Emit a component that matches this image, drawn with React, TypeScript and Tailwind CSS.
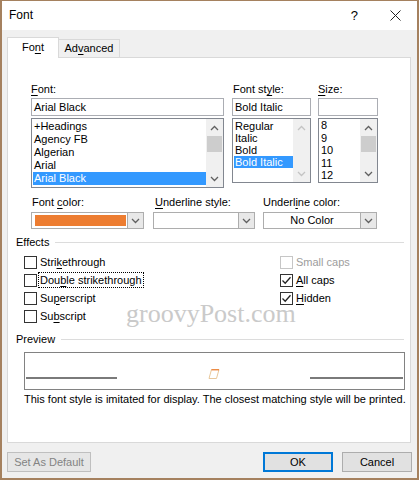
import React from "react";

const U = ({ children }: { children: React.ReactNode }) => (
  <span className="underline underline-offset-[2px] decoration-[1px]">{children}</span>
);

function Chev({ up, color = "#606060" }: { up?: boolean; color?: string }) {
  return (
    <svg width="9" height="6" viewBox="0 0 9 6">
      <path
        d={up ? "M1 5 L4.5 1.5 L8 5" : "M1 1 L4.5 4.5 L8 1"}
        fill="none"
        stroke={color}
        strokeWidth="1.3"
      />
    </svg>
  );
}

function ScrollBar({ disabled, thumb }: { disabled?: boolean; thumb?: boolean }) {
  const c = disabled ? "#c4c4c4" : "#606060";
  return (
    <div className="w-[17px] h-full bg-[#f0f0f0] flex flex-col">
      <div className="h-[17px] flex items-center justify-center">
        <Chev up color={c} />
      </div>
      {thumb ? <div className="h-[16px] mx-[1px] bg-[#cdcdcd]" /> : null}
      <div className="flex-1" />
      <div className="h-[17px] flex items-center justify-center">
        <Chev color={c} />
      </div>
    </div>
  );
}

function Check({ checked, disabled }: { checked?: boolean; disabled?: boolean }) {
  return (
    <div
      className={
        "w-[13px] h-[13px] border bg-white flex items-center justify-center shrink-0 " +
        (disabled ? "border-[#c6c6c6]" : "border-[#333333]")
      }
    >
      {checked ? (
        <svg width="11" height="11" viewBox="0 0 11 11">
          <path d="M1.5 5.5 L4.2 8.2 L9.5 2.2" fill="none" stroke="#222" strokeWidth="1.3" />
        </svg>
      ) : null}
    </div>
  );
}

function Row({
  children,
  checked,
  disabled,
}: {
  children: React.ReactNode;
  checked?: boolean;
  disabled?: boolean;
}) {
  return (
    <div className="h-[18px] flex items-center">
      <Check checked={checked} disabled={disabled} />
      <div className={"ml-[3px] " + (disabled ? "text-[#9d9d9d]" : "text-black")}>{children}</div>
    </div>
  );
}

function Dropdown({ children, w }: { children?: React.ReactNode; w: string }) {
  return (
    <div className={"h-[17px] border border-[#adadad] bg-white flex " + w}>
      <div className="flex-1 flex items-center">{children}</div>
      <div className="w-[16px] border-l border-[#adadad] bg-[#e8e8e8] flex items-center justify-center">
        <Chev />
      </div>
    </div>
  );
}

function SectionHeader({ label }: { label: string }) {
  return (
    <div className="h-[15px] flex items-center pl-[8px] pr-[6px]">
      <span>{label}</span>
      <div className="flex-1 h-px bg-[#dcdcdc] ml-[6px]" />
    </div>
  );
}

export default function App() {
  const fonts = ["+Headings", "Agency FB", "Algerian", "Arial", "Arial Black"];
  const styles = ["Regular", "Italic", "Bold", "Bold Italic"];
  const sizes = ["8", "9", "10", "11", "12"];
  return (
    <div className="w-[419px] h-[480px] flex flex-col border-t border-l-2 border-r-2 border-b-2 border-[#a5815f] font-['Segoe_UI','Liberation_Sans',Arial,sans-serif] text-[11px] leading-[15px] text-black">
      {/* title bar */}
      <div className="h-[29px] bg-white flex items-center pl-[7px] pr-[16px] text-[12px]">
        <span>Font</span>
        <div className="flex-1" />
        <span className="mr-[32px] text-[13px]">?</span>
        <svg width="11" height="11" viewBox="0 0 11 11">
          <path d="M0.5 0.5 L10.5 10.5 M10.5 0.5 L0.5 10.5" stroke="#222" strokeWidth="1" />
        </svg>
      </div>

      {/* body */}
      <div className="flex-1 bg-[#f0f0f0] flex flex-col pt-[7px]">
        {/* tabs */}
        <div className="h-[20px] flex items-end ml-[5px]">
          <div className="relative z-10 h-[21px] w-[52px] bg-white border-t border-l border-r border-[#d9d9d9] flex items-center justify-center -mb-px pb-px">
            <span>
              Fo<U>n</U>t
            </span>
          </div>
          <div className="h-[18px] w-[61px] border-t border-r border-[#d9d9d9] bg-[#f0f0f0] flex items-center justify-center">
            <span>
              Ad<U>v</U>anced
            </span>
          </div>
        </div>

        {/* panel */}
        <div className="relative ml-[5px] w-[404px] h-[386px] bg-white border border-[#d9d9d9] flex flex-col pt-[24px]">
          {/* row 1 */}
          <div className="flex pl-[23px]">
            <div className="w-[193px] flex flex-col">
              <div className="h-[15px]">
                <U>F</U>ont:
              </div>
              <div className="mt-[1px] h-[18px] border border-[#abadb3] flex items-center pl-[2px]">
                Arial Black
              </div>
              <div className="mt-[2px] h-[70px] border border-[#828790] flex">
                <div className="flex-1 flex flex-col pt-[1px] pl-px">
                  {fonts.map((f, i) => (
                    <div
                      key={f}
                      className={
                        "h-[13px] leading-[13px] pl-px " +
                        (i === 4 ? "bg-[#3399ff] text-white" : "")
                      }
                    >
                      {f}
                    </div>
                  ))}
                </div>
                <ScrollBar thumb />
              </div>
            </div>
            <div className="w-[79px] ml-[8px] flex flex-col">
              <div className="h-[15px] pl-px">
                Font st<U>y</U>le:
              </div>
              <div className="mt-[1px] h-[18px] border border-[#abadb3] flex items-center pl-[2px]">
                Bold Italic
              </div>
              <div className="mt-[2px] h-[65px] border border-[#828790] flex">
                <div className="flex-1 flex flex-col pt-[1px] pl-px">
                  {styles.map((f, i) => (
                    <div
                      key={f}
                      className={
                        "h-[12px] leading-[12px] pl-px " +
                        (i === 3 ? "bg-[#3399ff] text-white" : "")
                      }
                    >
                      {f}
                    </div>
                  ))}
                </div>
                <ScrollBar disabled />
              </div>
            </div>
            <div className="w-[60px] ml-[7px] flex flex-col">
              <div className="h-[15px]">
                <U>S</U>ize:
              </div>
              <div className="mt-[1px] h-[18px] border border-[#abadb3]" />
              <div className="mt-[2px] h-[65px] border border-[#828790] flex">
                <div className="flex-1 flex flex-col pl-[2px]">
                  {sizes.map((f) => (
                    <div key={f} className="h-[12.5px] leading-[12.5px]">
                      {f}
                    </div>
                  ))}
                </div>
                <ScrollBar thumb />
              </div>
            </div>
          </div>

          {/* row 2 */}
          <div className="flex pl-[23px] mt-[7px]">
            <div className="flex flex-col w-[113px]">
              <div className="h-[15px] pl-px">
                Font <U>c</U>olor:
              </div>
              <div className="mt-[2px]">
                <Dropdown w="w-[113px]">
                  <div className="ml-[3px] h-[11px] w-[91px] bg-[#ed7d31]" />
                </Dropdown>
              </div>
            </div>
            <div className="flex flex-col w-[102px] ml-[9px]">
              <div className="h-[15px] pl-[2px]">
                <U>U</U>nderline style:
              </div>
              <div className="mt-[2px]">
                <Dropdown w="w-[102px]" />
              </div>
            </div>
            <div className="flex flex-col w-[114px] ml-[8px]">
              <div className="h-[15px]">
                Underl<U>i</U>ne color:
              </div>
              <div className="mt-[2px]">
                <Dropdown w="w-[114px]">
                  <div className="w-full text-center">No Color</div>
                </Dropdown>
              </div>
            </div>
          </div>

          {/* effects */}
          <div className="mt-[6px]">
            <SectionHeader label="Effects" />
          </div>
          <div className="flex mt-[3px] pl-[16px]">
            <div className="w-[256px] flex flex-col">
              <Row>
                Stri<U>k</U>ethrough
              </Row>
              <div className="h-[18px] flex items-center">
                <Check />
                <div className="ml-px border border-dotted border-black px-[1px] leading-[14px]">
                  Dou<U>b</U>le strikethrough
                </div>
              </div>
              <Row>
                Su<U>p</U>erscript
              </Row>
              <Row>
                Su<U>b</U>script
              </Row>
            </div>
            <div className="flex flex-col">
              <Row disabled>Small caps</Row>
              <Row checked>
                <U>A</U>ll caps
              </Row>
              <Row checked>
                <U>H</U>idden
              </Row>
            </div>
          </div>

          {/* preview */}
          <div className="mt-[7px]">
            <SectionHeader label="Preview" />
          </div>
          <div className="mt-[5px] ml-[16px] w-[381px] h-[38px] border border-[#828282] bg-white flex items-end pb-[10px] px-[1px]">
            <div className="w-[91px] h-[2px] bg-[#7a7a7a]" />
            <div className="flex-1 flex justify-center self-end mb-[-2px]">
              <svg width="12" height="10" viewBox="0 0 12 10" className="mb-[2px]">
                <path d="M3.5 0.5 L11 0.5 L8.5 9.5 L1 9.5 Z" fill="none" stroke="#e8c79a" strokeWidth="1" />
                <path d="M3.5 0.8 L11 0.8" stroke="#ed7d31" strokeWidth="1.2" />
              </svg>
            </div>
            <div className="w-[93px] h-[2px] bg-[#7a7a7a]" />
          </div>
          <div className="mt-[2px] ml-[16px] h-[15px] whitespace-nowrap">
            This font style is imitated for display. The closest matching style will be printed.
          </div>

          {/* watermark */}
          <div className="absolute left-[118px] top-[241px] font-['Liberation_Serif',serif] text-[26px] leading-[30px] text-[#cacaca] pointer-events-none">
            groovyPost.com
          </div>
        </div>

        {/* buttons */}
        <div className="mt-[9px] flex pl-[5px] pr-[5px]">
          <div className="w-[84px] h-[20px] border border-[#bfbfbf] bg-[#e6e6e6] text-[#838383] flex items-center justify-center">
            Set As Default
          </div>
          <div className="flex-1" />
          <div className="w-[70px] h-[20px] border-2 border-[#0078d7] bg-[#e1e1e1] flex items-center justify-center">
            OK
          </div>
          <div className="ml-[9px] w-[70px] h-[20px] border border-[#adadad] bg-[#e1e1e1] flex items-center justify-center">
            Cancel
          </div>
        </div>
      </div>
    </div>
  );
}
